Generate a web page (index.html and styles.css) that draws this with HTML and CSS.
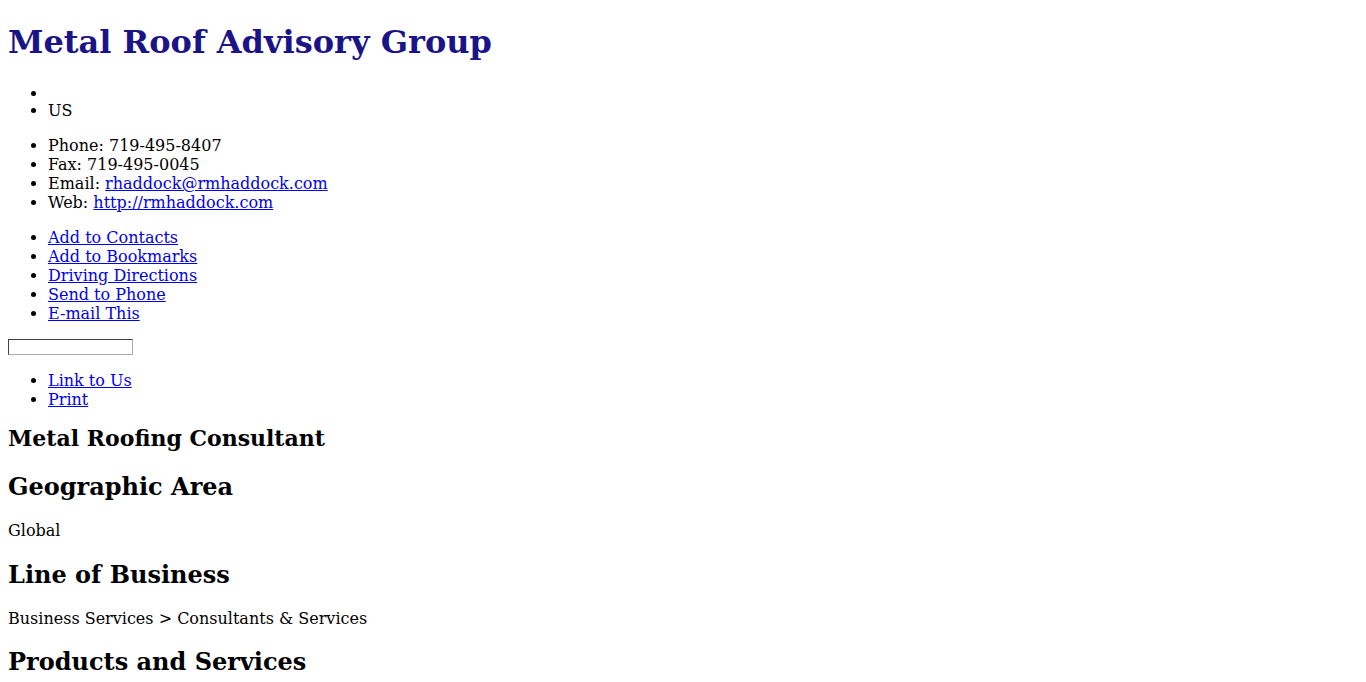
FILE: index.html
```html
<!DOCTYPE html>
<html>
<head>
<meta charset="utf-8">
<title>Metal Roof Advisory Group</title>
<link rel="stylesheet" href="styles.css">
</head>
<body class="page">
<h1 class="title">Metal Roof Advisory Group</h1>
<ul class="list address">
<li class="street">&nbsp;</li>
<li>US</li>
</ul>
<ul class="list">
<li>Phone: 719-495-8407</li>
<li>Fax: 719-495-0045</li>
<li>Email: <a class="link" href="#">rhaddock@rmhaddock.com</a></li>
<li>Web: <a class="link" href="#">http://rmhaddock.com</a></li>
</ul>
<ul class="list">
<li><a class="link" href="#">Add to Contacts</a></li>
<li><a class="link" href="#">Add to Bookmarks</a></li>
<li><a class="link" href="#">Driving Directions</a></li>
<li><a class="link" href="#">Send to Phone</a></li>
<li><a class="link" href="#">E-mail This</a></li>
</ul>
<input class="field" type="text">
<ul class="list">
<li><a class="link" href="#">Link to Us</a></li>
<li><a class="link" href="#">Print</a></li>
</ul>
<h3 class="sub">Metal Roofing Consultant</h3>
<h2 class="section">Geographic Area</h2>
<p class="text">Global</p>
<h2 class="section">Line of Business</h2>
<p class="text">Business Services &gt; Consultants &amp; Services</p>
<h2 class="section last">Products and Services</h2>
</body>
</html>
```

FILE: styles.css
```css
.page {
  margin: 8px;
  font-family: "DejaVu Serif", serif;
  font-size: 16px;
  color: #000;
  background: #fff;
}
.title {
  color: #1b1488;
  font-size: 32px;
  margin: 15px 0 21px;
}
.list {
  margin: 16px 0;
  padding-left: 40px;
}
.address {
  margin-top: 19px;
}
.street {
  height: 17px;
  padding-top: 2px;
}
.link {
  color: #0000ee;
}
.field {
  display: block;
  width: 123px;
  height: 14px;
  padding: 0;
  border-style: solid;
  border-width: 1px;
  border-color: #404040 #a9a9a9 #a9a9a9 #404040;
  box-sizing: content-box;
  margin: 0;
}
.sub {
  font-size: 22px;
  margin: 16px 0 21px;
}
.section {
  font-size: 24px;
  margin: 19.92px 0;
}
.last {
  margin-top: 19px;
}
.text {
  margin: 16px 0;
}
```
